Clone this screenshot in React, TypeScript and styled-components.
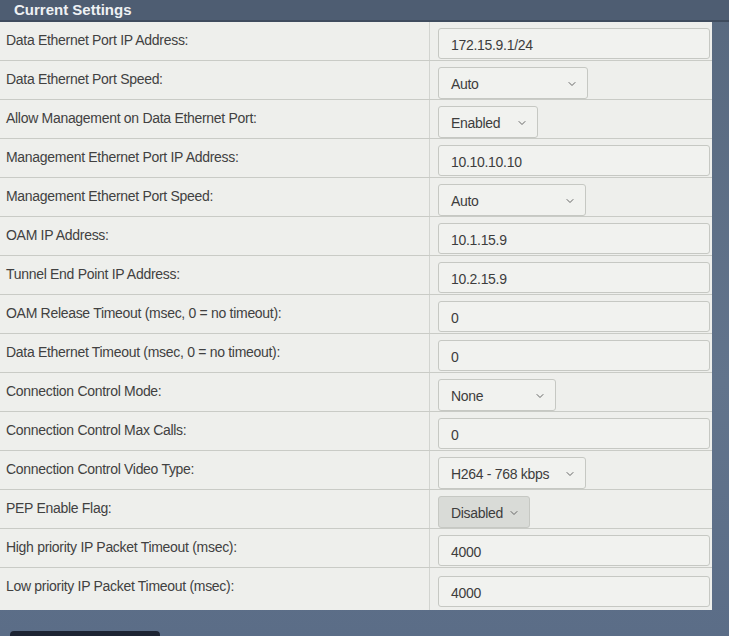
import React from "react";
import styled, { createGlobalStyle } from "styled-components";
import { ChevronDown } from "lucide-react";

const Global = createGlobalStyle`
  html, body { margin: 0; padding: 0; }
  body {
    background: #5f7189;
    font-family: "Liberation Sans", Arial, sans-serif;
    overflow: hidden;
  }
`;

const Page = styled.div`
  width: 729px;
  height: 636px;
  display: flex;
  flex-direction: column;
  background: linear-gradient(180deg, #58697f 0%, #62748c 60%, #5b6d87 100%);
`;

const Header = styled.div`
  height: 20px;
  background: #4e5d72;
  border-bottom: 2px solid #3f4c5e;
  padding-left: 14px;
  display: flex;
  align-items: center;
`;

const Title = styled.div`
  color: #eef1f4;
  font-size: 15px;
  font-weight: bold;
  line-height: 18px;
`;

const Table = styled.div`
  width: 712px;
  background: #eeefec;
  display: flex;
  flex-direction: column;
`;

const Row = styled.div`
  display: grid;
  grid-template-columns: 430px 1fr;
  height: 38px;
  border-bottom: 1px solid #c9cbc6;
  &:last-child { border-bottom: none; height: 42px; }
`;

const Label = styled.div`
  padding: 10px 6px 0;
  border-right: 1px solid #d2d4d0;
  font-size: 14px;
  color: #414141;
  letter-spacing: -0.3px;
  white-space: nowrap;
`;

const Value = styled.div`
  display: flex;
  align-items: center;
  padding: 5px 0 0 8px;
`;

const TextBox = styled.div`
  box-sizing: border-box;
  width: 272px;
  height: 31px;
  border: 1px solid #c6c8c3;
  border-radius: 3px;
  background: #f1f2ef;
  display: flex;
  align-items: center;
  padding: 2px 0 0 12px;
  font-size: 14px;
  color: #3d3d3d;
  letter-spacing: -0.3px;
`;

const SelectBox = styled.div<{ $w: number; $disabled?: boolean }>`
  box-sizing: border-box;
  width: ${(p) => p.$w}px;
  height: 32px;
  border: 1px solid #c6c8c3;
  border-radius: 3px;
  background: ${(p) => (p.$disabled ? "#d9dbd7" : "#f1f2ef")};
  display: flex;
  align-items: center;
  justify-content: space-between;
  padding: 2px 9px 0 12px;
  font-size: 14px;
  color: #3d3d3d;
  letter-spacing: -0.3px;
`;

type Field =
  | { label: string; kind: "text"; value: string }
  | { label: string; kind: "select"; value: string; w: number; disabled?: boolean };

const fields: Field[] = [
  { label: "Data Ethernet Port IP Address:", kind: "text", value: "172.15.9.1/24" },
  { label: "Data Ethernet Port Speed:", kind: "select", value: "Auto", w: 150 },
  { label: "Allow Management on Data Ethernet Port:", kind: "select", value: "Enabled", w: 100 },
  { label: "Management Ethernet Port IP Address:", kind: "text", value: "10.10.10.10" },
  { label: "Management Ethernet Port Speed:", kind: "select", value: "Auto", w: 148 },
  { label: "OAM IP Address:", kind: "text", value: "10.1.15.9" },
  { label: "Tunnel End Point IP Address:", kind: "text", value: "10.2.15.9" },
  { label: "OAM Release Timeout (msec, 0 = no timeout):", kind: "text", value: "0" },
  { label: "Data Ethernet Timeout (msec, 0 = no timeout):", kind: "text", value: "0" },
  { label: "Connection Control Mode:", kind: "select", value: "None", w: 118 },
  { label: "Connection Control Max Calls:", kind: "text", value: "0" },
  { label: "Connection Control Video Type:", kind: "select", value: "H264 - 768 kbps", w: 148 },
  { label: "PEP Enable Flag:", kind: "select", value: "Disabled", w: 92, disabled: true },
  { label: "High priority IP Packet Timeout (msec):", kind: "text", value: "4000" },
  { label: "Low priority IP Packet Timeout (msec):", kind: "text", value: "4000" },
];

const Footer = styled.div`
  flex: 1;
  display: flex;
  align-items: flex-end;
  padding-left: 10px;
`;

const DarkButton = styled.div`
  width: 150px;
  height: 5px;
  background: #1d2433;
  border-radius: 4px 4px 0 0;
`;

export default function App() {
  return (
    <Page>
      <Global />
      <Header>
        <Title>Current Settings</Title>
      </Header>
      <Table>
        {fields.map((f) => (
          <Row key={f.label}>
            <Label>{f.label}</Label>
            <Value>
              {f.kind === "text" ? (
                <TextBox>{f.value}</TextBox>
              ) : (
                <SelectBox $w={f.w} $disabled={f.disabled}>
                  <span>{f.value}</span>
                  <ChevronDown size={12} strokeWidth={2} color="#666" />
                </SelectBox>
              )}
            </Value>
          </Row>
        ))}
      </Table>
      <Footer>
        <DarkButton />
      </Footer>
    </Page>
  );
}
